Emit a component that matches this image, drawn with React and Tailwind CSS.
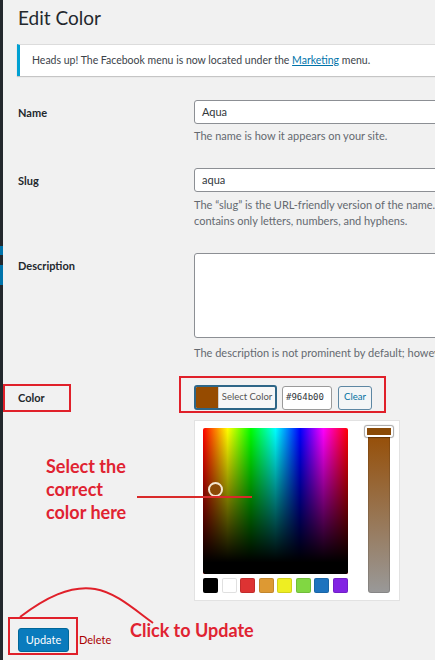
import React from "react";

const swatches = ["#000000", "#ffffff", "#dd3333", "#dd9933", "#eeee22", "#81d742", "#1e73be", "#8224e3"];

function Row({ label, children, className = "" }) {
  return (
    <div className={"flex " + className}>
      <div className="w-[176px] shrink-0 pt-[5px] text-[11px] leading-[16px] font-bold text-[#23282d]">{label}</div>
      <div className="flex-1 min-w-0 flex flex-col">{children}</div>
    </div>
  );
}

export default function App() {
  return (
    <div className="relative w-[435px] h-[660px] overflow-hidden bg-[#f1f1f1] flex font-['Lato',sans-serif]">
      <div className="w-[3px] shrink-0 flex flex-col">
        <div className="h-[246px] bg-[#23282d]" />
        <div className="h-[9px] bg-[#0073aa]" />
        <div className="h-[10px] bg-[#23282d]" />
        <div className="h-[20px] bg-[#0073aa]" />
        <div className="flex-1 bg-[#23282d]" />
      </div>

      <div className="flex-1 min-w-0 flex flex-col pl-[15px] pt-[5px]">
        <h1 className="text-[19px] leading-[26px] font-normal text-[#23282d]">Edit Color</h1>

        <div className="mt-[13px] -ml-px w-[600px] h-[32px] flex items-center bg-white border-l-[3px] border-l-[#00a0d2] border-t border-t-[#dcdcdc] shadow-[0_1px_1px_rgba(0,0,0,0.18)] pl-[12px] text-[10.5px] text-[#3c434a]">
          <span>
            Heads up! The Facebook menu is now located under the{" "}
            <span className="underline text-[#0073aa]">Marketing</span> menu.
          </span>
        </div>

        <Row label="Name" className="mt-[24px]">
          <div className="w-[300px] h-[24px] rounded-[3px] border border-[#8c8f94] bg-white pl-[7px] flex items-center text-[11px] text-[#32373c]">Aqua</div>
          <p className="mt-[4px] text-[11px] leading-[16px] text-[#646970]">The name is how it appears on your site.</p>
        </Row>

        <Row label="Slug" className="mt-[24px]">
          <div className="w-[300px] h-[24px] rounded-[3px] border border-[#8c8f94] bg-white pl-[7px] flex items-center text-[11px] text-[#32373c]">aqua</div>
          <p className="mt-[5px] text-[11px] leading-[16px] text-[#646970] whitespace-nowrap">The “slug” is the URL-friendly version of the name. It is usually all lowercase and</p>
          <p className="text-[11px] leading-[16px] text-[#646970] whitespace-nowrap">contains only letters, numbers, and hyphens.</p>
        </Row>

        <Row label="Description" className="mt-[24px]">
          <div className="w-[300px] h-[85px] rounded-[3px] border border-[#8c8f94] bg-white" />
          <p className="mt-[7px] text-[11px] leading-[16px] text-[#646970] whitespace-nowrap">The description is not prominent by default; however, some themes may show it.</p>
        </Row>

        <Row label="Color" className="mt-[24px]">
          <div className="flex items-center">
            <div className="w-[83px] h-[25px] flex rounded-[3px] border-2 border-[#2e6687] bg-[#f7f7f7] overflow-hidden">
              <span className="w-[22px] bg-[#964b00]" />
              <span className="flex-1 flex items-center justify-center text-[9.5px] text-[#555] border-l border-[#cfcfcf]">Select Color</span>
            </div>
            <div className="ml-[5px] w-[50px] h-[24px] rounded-[3px] border border-[#9a9a9a] bg-white flex items-center pl-[3px] text-[9px] text-[#32373c] font-['DejaVu_Sans_Mono',monospace]">#964b00</div>
            <div className="ml-[6px] w-[34px] h-[24px] rounded-[3px] border border-[#5d87a3] bg-[#f3f5f6] flex items-center justify-center text-[9.5px] text-[#0071a1]">Clear</div>
          </div>

          <div className="mt-[10px] w-[206px] h-[181px] bg-white border border-[#e2e2e2] flex pl-[8px] pt-[7px]">
            <div className="w-[145px] flex flex-col">
              <div className="relative w-[145px] h-[146px] rounded-[2px] overflow-hidden bg-[linear-gradient(to_right,#ff0000,#ffff00_17%,#00ff00_33%,#00ffff_50%,#0000ff_67%,#ff00ff_83%,#ff0000)]">
                <div className="absolute inset-0 bg-[linear-gradient(to_bottom,rgba(0,0,0,0),#000_92%)]" />
                <div className="absolute left-[5px] top-[54px] w-[15px] h-[15px] rounded-full border-2 border-[#f3e6d0] bg-[#8a4a06]" />
              </div>
              <div className="mt-[4px] flex justify-between">
                {swatches.map((c) => (
                  <div key={c} className="w-[15px] h-[15px] rounded-[2px] shadow-[inset_0_0_0_1px_rgba(0,0,0,0.12)]" style={{ backgroundColor: c }} />
                ))}
              </div>
            </div>
            <div className="relative ml-[20px] mt-[-2px] w-[22px] h-[167px] rounded-[3px] bg-[linear-gradient(to_bottom,#964b00,#999999)] shadow-[inset_0_0_0_1px_rgba(0,0,0,0.12)]">
              <div className="absolute left-[-3px] top-[0px] w-[28px] h-[11px] rounded-[2px] border-2 border-white bg-[#8a4a06] shadow-[0_0_1px_1px_rgba(0,0,0,0.35)]" />
            </div>
          </div>
        </Row>

        <div className="mt-[27px] flex items-center">
          <div className="w-[51px] h-[24px] rounded-[3px] bg-[#0a7bbd] border border-[#006799] flex items-center justify-center text-[11px] text-white">Update</div>
          <span className="ml-[10px] text-[11px] text-[#a00]">Delete</span>
        </div>
      </div>

      {/* annotations */}
      <div className="absolute left-[3px] top-[384px] w-[68px] h-[28px] border-2 border-[#e0202a]" />
      <div className="absolute left-[179px] top-[376px] w-[207px] h-[37px] border-2 border-[#e0202a]" />
      <div className="absolute left-[46px] top-[455px] text-[18px] leading-[23px] font-bold text-[#e02331]">
        <div>Select the</div>
        <div>correct</div>
        <div>color here</div>
      </div>
      <div className="absolute left-[137px] top-[496px] w-[115px] h-[2px] bg-[#d92a2a]" />
      <svg className="absolute left-0 top-[580px]" width="170" height="60" viewBox="0 580 170 60">
        <path d="M20 617 C45 598 70 585 95 589 C115 592 135 610 153 623" fill="none" stroke="#e0202a" strokeWidth="2" />
      </svg>
      <div className="absolute left-[8px] top-[617px] w-[70px] h-[38px] border-2 border-[#e0202a]" />
      <div className="absolute left-[130px] top-[619px] text-[18px] leading-[23px] font-bold text-[#e02331]">Click to Update</div>
    </div>
  );
}
